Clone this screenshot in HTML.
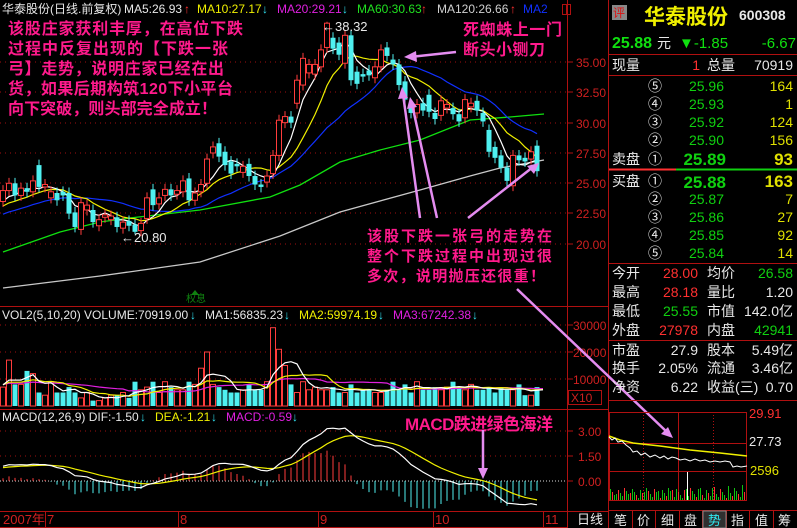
<!DOCTYPE html>
<html><head><meta charset="utf-8">
<style>
html,body{margin:0;padding:0;background:#000;width:797px;height:528px;overflow:hidden}
svg{display:block}
text{font-family:"Liberation Sans","Noto Sans CJK SC",sans-serif}
.cj{font-family:"Liberation Sans","Noto Sans CJK SC",sans-serif;font-weight:bold}
.ax{fill:#d02020;font-size:12px}
.w{fill:#e8e8e8}
</style></head><body>
<svg id="s" width="797" height="528" viewBox="0 0 797 528" xmlns="http://www.w3.org/2000/svg">
<rect width="797" height="528" fill="#000"/>
<defs><clipPath id="mc"><rect x="0" y="18" width="566" height="287"/></clipPath>
<clipPath id="vc"><rect x="0" y="322" width="566" height="86"/></clipPath></defs>
<g id="grid" stroke="#a01010" stroke-dasharray="1,4" stroke-width="1">
<line x1="0" y1="62" x2="566" y2="62"/><line x1="0" y1="92" x2="566" y2="92"/><line x1="0" y1="123" x2="566" y2="123"/><line x1="0" y1="153" x2="566" y2="153"/><line x1="0" y1="183" x2="566" y2="183"/><line x1="0" y1="213" x2="566" y2="213"/><line x1="0" y1="244" x2="566" y2="244"/>
<line x1="0" y1="325" x2="566" y2="325"/><line x1="0" y1="352" x2="566" y2="352"/><line x1="0" y1="379" x2="566" y2="379"/>
<line x1="0" y1="431" x2="566" y2="431"/><line x1="0" y1="456" x2="566" y2="456"/>
</g>
<line x1="0" y1="481" x2="566" y2="481" stroke="#ddd" stroke-dasharray="1,2"/>
<g id="draw"></g>
<!-- frame lines -->
<g stroke="#b01010" stroke-width="1" fill="none">
<line x1="0" y1="306.5" x2="608" y2="306.5"/><line x1="0" y1="409.5" x2="608" y2="409.5"/><line x1="0" y1="511.5" x2="608" y2="511.5"/>
<line x1="567.5" y1="0" x2="567.5" y2="528"/><line x1="608.5" y1="0" x2="608.5" y2="528"/>
<line x1="45.5" y1="511" x2="45.5" y2="528"/><line x1="178.5" y1="511" x2="178.5" y2="528"/><line x1="318.5" y1="511" x2="318.5" y2="528"/><line x1="433.5" y1="511" x2="433.5" y2="528"/><line x1="543.5" y1="511" x2="543.5" y2="528"/>
<line x1="0" y1="527.5" x2="567" y2="527.5"/>
<rect x="562.5" y="4.5" width="8" height="10"/><line x1="566.5" y1="5" x2="566.5" y2="14"/>
<line x1="568" y1="62" x2="573" y2="62"/><line x1="568" y1="92" x2="573" y2="92"/><line x1="568" y1="123" x2="573" y2="123"/><line x1="568" y1="153" x2="573" y2="153"/><line x1="568" y1="183" x2="573" y2="183"/><line x1="568" y1="213" x2="573" y2="213"/><line x1="568" y1="244" x2="573" y2="244"/>
<line x1="568" y1="325" x2="573" y2="325"/><line x1="568" y1="352" x2="573" y2="352"/><line x1="568" y1="379" x2="573" y2="379"/>
<line x1="568" y1="431" x2="573" y2="431"/><line x1="568" y1="456" x2="573" y2="456"/><line x1="568" y1="481" x2="573" y2="481"/>
<rect x="568.5" y="390.5" width="33" height="14"/>
</g>
<!-- axis labels -->
<g class="ax">
<text x="576" y="67">35.00</text><text x="576" y="97">32.50</text><text x="576" y="128">30.00</text><text x="576" y="158">27.50</text><text x="576" y="188">25.00</text><text x="576" y="218">22.50</text><text x="576" y="249">20.00</text>
<text x="573" y="330">30000</text><text x="573" y="357">20000</text><text x="573" y="384">10000</text><text x="571" y="402">X10</text>
<text x="578" y="436">3.00</text><text x="578" y="461">1.50</text><text x="578" y="486">0.00</text>
<text x="3" y="524" font-size="13">2007年</text><text x="47" y="524" font-size="13">7</text><text x="180" y="524" font-size="13">8</text><text x="320" y="524" font-size="13">9</text><text x="435" y="524" font-size="13">10</text><text x="545" y="524" font-size="13">11</text>
</g>
<text x="577" y="524" font-size="13" class="w">日线</text>
<!-- header -->
<g font-size="12">
<text x="2" y="13" class="w">华泰股份(日线.前复权)</text>
<text x="124" y="13" class="w">MA5:26.93</text><text x="184" y="13" fill="#ff3030">↑</text>
<text x="197" y="13" fill="#f0f000">MA10:27.17</text><text x="262" y="13" fill="#30e0f0">↓</text>
<text x="277" y="13" fill="#e020e0">MA20:29.21</text><text x="342" y="13" fill="#30e0f0">↓</text>
<text x="357" y="13" fill="#20e020">MA60:30.63</text><text x="421" y="13" fill="#ff3030">↑</text>
<text x="437" y="13" fill="#d0d0d0">MA120:26.66</text><text x="510" y="13" fill="#ff3030">↑</text>
<text x="523" y="13" fill="#1030ff">MA2</text>
<text x="2" y="319" class="w">VOL2(5,10,20) VOLUME:70919.00</text><text x="190" y="319" fill="#30e0f0">↓</text>
<text x="205" y="319" class="w">MA1:56835.23</text><text x="284" y="319" fill="#30e0f0">↓</text>
<text x="299" y="319" fill="#f0f000">MA2:59974.19</text><text x="378" y="319" fill="#30e0f0">↓</text>
<text x="393" y="319" fill="#e020e0">MA3:67242.38</text><text x="472" y="319" fill="#30e0f0">↓</text>
<text x="2" y="421" class="w">MACD(12,26,9) DIF:-1.50</text><text x="140" y="421" fill="#30e0f0">↓</text>
<text x="155" y="421" fill="#f0f000">DEA:-1.21</text><text x="211" y="421" fill="#30e0f0">↓</text>
<text x="226" y="421" fill="#e020e0">MACD:-0.59</text><text x="292" y="421" fill="#30e0f0">↓</text>
<text x="322" y="31" class="w" font-size="13">←38.32</text>
<text x="121" y="242" class="w" font-size="13">←20.80</text>
<text x="186" y="302" fill="#108010" font-size="10">权息</text>
</g>
<polygon points="195,290 191,295 199,295" fill="#108010"/>
<!-- annotations -->
<g class="cj" fill="#ff1a8c" font-size="16">
<text x="8" y="34" textLength="235" lengthAdjust="spacing">该股庄家获利丰厚，在高位下跌</text>
<text x="8" y="54" textLength="220" lengthAdjust="spacing">过程中反复出现的【下跌一张</text>
<text x="8" y="74" textLength="216" lengthAdjust="spacing">弓】走势，说明庄家已经在出</text>
<text x="8" y="94" textLength="225" lengthAdjust="spacing">货，如果后期构筑120下小平台</text>
<text x="8" y="114" textLength="209" lengthAdjust="spacing">向下突破，则头部完全成立！</text>
<text x="463" y="35" textLength="99" lengthAdjust="spacing">死蜘蛛上一门</text>
<text x="463" y="55" textLength="82" lengthAdjust="spacing">断头小铡刀</text>
<text x="367" y="241" font-size="15" textLength="185" lengthAdjust="spacing">该股下跌一张弓的走势在</text>
<text x="367" y="261" font-size="15" textLength="185" lengthAdjust="spacing">整个下跌过程中出现过很</text>
<text x="367" y="281" font-size="15" textLength="178" lengthAdjust="spacing">多次，说明抛压还很重！</text>
<text x="405" y="430" font-size="17" textLength="148" lengthAdjust="spacing">MACD跌进绿色海洋</text>
</g>
<!-- arrows -->
<g stroke="#e48cf0" stroke-width="2.5" fill="#e48cf0">
<line x1="456" y1="52" x2="410" y2="57"/><polygon points="404,57 416,51 417,62" stroke="none"/>
<line x1="420" y1="218" x2="403" y2="94"/><polygon points="402,87 398,99 408,98" stroke="none"/>
<line x1="437" y1="218" x2="412" y2="104"/><polygon points="410,97 407,109 417,107" stroke="none"/>
<line x1="468" y1="218" x2="533" y2="167"/><polygon points="539,163 527,166 534,174" stroke="none"/>
<line x1="517" y1="289" x2="668" y2="433"/><polygon points="673,438 661,434 668,427" stroke="none"/>
<line x1="483" y1="430" x2="483" y2="472"/><polygon points="483,479 478,468 488,468" stroke="none"/>
</g>
<!-- right panel -->
<rect x="612" y="5" width="15" height="15" fill="#888"/>
<text x="613" y="17" fill="#e01010" font-size="12">评</text>
<text x="644" y="24" fill="#f0f000" font-size="21" class="cj">华泰股份</text>
<text x="739" y="20" class="w" font-size="14" font-weight="bold">600308</text>
<text x="612" y="48" fill="#10e010" font-size="16" font-weight="bold">25.88</text>
<text x="657" y="48" class="w" font-size="14">元</text>
<text x="679" y="48" fill="#10e010" font-size="15">▼-1.85</text>
<text x="796" y="48" fill="#10e010" font-size="15" text-anchor="end">-6.67</text>
<g stroke="#b01010"><line x1="609" y1="54.5" x2="797" y2="54.5"/><line x1="609" y1="75.5" x2="797" y2="75.5"/><line x1="609" y1="263.5" x2="797" y2="263.5"/><line x1="609" y1="340.5" x2="797" y2="340.5"/><line x1="609" y1="400.5" x2="797" y2="400.5"/><line x1="609" y1="510.5" x2="797" y2="510.5"/></g>
<line x1="609" y1="169.5" x2="676" y2="169.5" stroke="#ff3030" stroke-width="2"/><line x1="676" y1="169.5" x2="797" y2="169.5" stroke="#10d010" stroke-width="2"/>
<g font-size="14">
<text x="612" y="70" class="w">现量</text><text x="700" y="70" fill="#ff3030" text-anchor="end">1</text><text x="707" y="70" class="w">总量</text><text x="793" y="70" class="w" text-anchor="end">70919</text>
</g>
<g font-size="14" id="ob"></g>
<g font-size="14">
<text x="612" y="278" class="w">今开</text><text x="698" y="278" fill="#ff3030" text-anchor="end">28.00</text><text x="707" y="278" class="w">均价</text><text x="793" y="278" fill="#10d010" text-anchor="end">26.58</text>
<text x="612" y="297" class="w">最高</text><text x="698" y="297" fill="#ff3030" text-anchor="end">28.18</text><text x="707" y="297" class="w">量比</text><text x="793" y="297" class="w" text-anchor="end">1.20</text>
<text x="612" y="316" class="w">最低</text><text x="698" y="316" fill="#10d010" text-anchor="end">25.55</text><text x="707" y="316" class="w">市值</text><text x="793" y="316" class="w" text-anchor="end">142.0亿</text>
<text x="612" y="335" class="w">外盘</text><text x="698" y="335" fill="#ff3030" text-anchor="end">27978</text><text x="707" y="335" class="w">内盘</text><text x="793" y="335" fill="#10d010" text-anchor="end">42941</text>
<text x="612" y="355" class="w">市盈</text><text x="698" y="355" class="w" text-anchor="end">27.9</text><text x="707" y="355" class="w">股本</text><text x="793" y="355" class="w" text-anchor="end">5.49亿</text>
<text x="612" y="373" class="w">换手</text><text x="698" y="373" class="w" text-anchor="end">2.05%</text><text x="707" y="373" class="w">流通</text><text x="793" y="373" class="w" text-anchor="end">3.46亿</text>
<text x="612" y="392" class="w">净资</text><text x="698" y="392" class="w" text-anchor="end">6.22</text><text x="707" y="392" class="w">收益(三)</text><text x="793" y="392" class="w" text-anchor="end">0.70</text>
</g>
<!-- mini chart -->
<g stroke="#b01010" fill="none">
<rect x="609.5" y="412.5" width="137" height="88"/>
<line x1="609" y1="443.5" x2="747" y2="443.5"/><line x1="609" y1="471.5" x2="747" y2="471.5"/>
<line x1="678.5" y1="412" x2="678.5" y2="500"/>
<line x1="643.5" y1="412" x2="643.5" y2="500" stroke-dasharray="1,2"/><line x1="713.5" y1="412" x2="713.5" y2="500" stroke-dasharray="1,2"/>
</g>
<polyline points="609,436 620,440 633,443 660,446 690,450 720,453 747,456" stroke="#f0f000" stroke-width="1.5" fill="none"/>
<polyline points="609,437 612,440 615,438 618,442 622,441 626,445 630,448 633,452 637,451 641,455 645,453 650,457 655,455 660,458 664,456 668,459 672,457 676,458 680,460 685,459 690,461 695,459 700,461 705,460 710,462 715,461 720,462 725,461 730,462 733,467 737,466 741,467 747,466" stroke="#fff" stroke-width="1" fill="none"/>
<g id="mv"></g>
<line x1="687.5" y1="472" x2="687.5" y2="500" stroke="#fff"/>
<text x="749" y="418" fill="#ff3030" font-size="13">29.91</text>
<text x="749" y="446" class="w" font-size="13">27.73</text>
<text x="750" y="475" fill="#e0e000" font-size="13">2596</text>
<!-- tabs -->
<g stroke="#b01010"><line x1="632.5" y1="511" x2="632.5" y2="528"/><line x1="655.5" y1="511" x2="655.5" y2="528"/><line x1="679.5" y1="511" x2="679.5" y2="528"/><line x1="702.5" y1="511" x2="702.5" y2="528"/><line x1="726.5" y1="511" x2="726.5" y2="528"/><line x1="749.5" y1="511" x2="749.5" y2="528"/><line x1="773.5" y1="511" x2="773.5" y2="528"/></g>
<rect x="703" y="511" width="23" height="17" fill="#303030" stroke="#888"/>
<g font-size="13" class="w">
<text x="614" y="525">笔</text><text x="637" y="525">价</text><text x="661" y="525">细</text><text x="684" y="525">盘</text><text x="708" y="525" fill="#30e8f0" style="fill:#30e8f0">势</text><text x="731" y="525">指</text><text x="755" y="525">值</text><text x="778" y="525">筹</text>
</g>
</svg>
<script>
(function(){
var NS="http://www.w3.org/2000/svg";
function el(p,t,a){var e=document.createElementNS(NS,t);for(var k in a)e.setAttribute(k,a[k]);p.appendChild(e);return e;}
var D=[[23.5,24.4],[24.4,25.0],[25.0,24.0],[24.0,24.6],[24.6,24.3],[24.3,25.2],[26.5,24.7],[24.7,24.9],[23.8,24.3],[24.2,23.6],[24.3,24.0],[24.2,22.5],[22.6,21.4],[21.2,23.4],[22.8,23.2],[22.8,21.8],[21.5,22.0],[22.2,22.4],[22.0,22.3],[22.2,21.4],[21.3,21.8],[21.9,21.5],[21.6,21.0],[21.1,21.7],[22.1,23.8],[24.5,23.2],[23.3,23.8],[24.0,24.5],[24.5,24.0],[24.1,24.4],[24.3,25.2],[25.4,23.6],[23.6,24.2],[24.3,24.9],[25.0,27.0],[27.5,28.0],[28.3,27.2],[27.6,26.5],[26.8,25.8],[26.6,26.4],[25.9,26.4],[26.6,25.6],[25.6,24.9],[24.9,24.7],[25.1,25.6],[25.8,27.3],[27.3,30.2],[30.0,30.5],[30.5,30.0],[31.6,33.5],[33.1,35.3],[34.1,34.8],[34.0,34.8],[34.6,36.0],[36.2,38.2],[37.0,36.1],[36.6,35.6],[34.9,37.2],[37.2,33.5],[34.2,33.2],[34.0,33.8],[34.3,33.9],[33.7,34.6],[34.6,36.0],[36.2,35.5],[35.2,34.8],[34.8,33.1],[33.4,31.9],[31.5,30.8],[30.8,31.5],[31.6,31.0],[32.3,30.9],[30.8,30.3],[30.6,31.8],[31.2,31.5],[31.2,30.7],[30.7,30.1],[30.4,31.9],[31.3,31.6],[31.8,31.0],[30.8,30.1],[29.4,27.6],[28.0,27.1],[27.3,26.3],[26.3,25.2],[24.8,27.3],[27.3,26.9],[27.1,26.8],[27.0,27.6],[28.1,26.0]];
var V=[7,17,8,8,13,12,5,4,9,5,5,7,5,3,5,2,2,3,4,4,5,3,9,6,7,9,5,9,7,6,6,9,8,14,20,8,7,6,5,5,6,8,6,6,9,29,21,15,8,5,9,6,7,6,6,7,5,5,8,5,6,6,5,5,6,9,6,8,5,9,6,6,7,6,7,9,7,6,8,6,6,7,5,7,6,6,8,4,4,7,7];
var NP=40,pad=[];for(var i=0;i<NP;i++)pad.push(18.5+5*i/(NP-1));
var cl=pad.concat(D.map(function(d){return d[1];}));
function Y(p){return 62+(35-p)*12.13;}
function X(i){return 3+6*i;}
var g=document.getElementById('draw');
var gm=el(g,'g',{'clip-path':'url(#mc)'});
el(gm,'polyline',{points:"3,252 60,232 100,222 130,218 200,210 270,197 300,185 340,162 380,150 420,140 470,120 510,117 544,114",stroke:"#10e010",fill:"none","stroke-width":"1.3"});
el(gm,'polyline',{points:"3,288 100,276 200,262 280,236 340,212 420,190 470,176 500,168 544,160",stroke:"#c8c8c8",fill:"none","stroke-width":"1.3"});
function ma(arr,n){var r=[];for(var i=0;i<arr.length;i++){if(i<n-1){r.push(null);continue;}var s=0;for(var j=i-n+1;j<=i;j++)s+=arr[j];r.push(s/n);}return r;}
[[20,"#1030ff"],[10,"#f0f000"],[5,"#ffffff"]].forEach(function(m){var a=ma(cl,m[0]),pts=[];for(var i=0;i<D.length;i++)pts.push(X(i)+","+Y(a[i+NP]).toFixed(1));el(gm,'polyline',{points:pts.join(" "),stroke:m[1],fill:"none","stroke-width":"1.2"});});
var RED="#ff3c3c",CY="#4ff0f0";
for(var i=0;i<D.length;i++){var o=D[i][0],c=D[i][1],hi=Math.max(o,c)+0.45,lo=Math.min(o,c)-0.45;if(i==22)lo=20.8;if(i==54)hi=38.32;var x=X(i),up=c>=o;var col=up?RED:CY;
el(gm,'line',{x1:x,y1:Y(hi),x2:x,y2:Y(lo),stroke:col});
var t=Y(Math.max(o,c)),b=Y(Math.min(o,c));if(b-t<1)b=t+1;
if(up)el(gm,'rect',{x:x-2.5,y:t,width:5,height:b-t,fill:"#000",stroke:col});else el(gm,'rect',{x:x-2.5,y:t,width:5,height:b-t,fill:col});}
// volume
var gv=el(g,'g',{'clip-path':'url(#vc)'});
for(var i=0;i<D.length;i++){var up=D[i][1]>=D[i][0],h=V[i]*2.7,x=X(i);if(up)el(gv,'rect',{x:x-2.5,y:406-h,width:5,height:h,fill:"none",stroke:RED});else el(gv,'rect',{x:x-2.5,y:406-h,width:5,height:h,fill:CY});}
var vp=[];for(var i=0;i<25;i++)vp.push(8);var vv=vp.concat(V);
[[20,"#e020e0"],[10,"#f0f000"],[5,"#ffffff"]].forEach(function(m){var a=ma(vv,m[0]),pts=[];for(var i=0;i<V.length;i++)pts.push(X(i)+","+(406-a[i+25]*2.7).toFixed(1));el(gv,'polyline',{points:pts.join(" "),stroke:m[1],fill:"none","stroke-width":"1.2"});});
// macd
function ema(a,n){var r=[a[0]],k=2/(n+1);for(var i=1;i<a.length;i++)r.push(r[i-1]+k*(a[i]-r[i-1]));return r;}
var e12=ema(cl,12),e26=ema(cl,26),dif=e12.map(function(v,i){return v-e26[i];}),dea=ema(dif,9);
function MY(v){return 481-v*16.7;}
var gd=el(g,'g',{});
for(var i=0;i<D.length;i++){var j=i+NP,m=2*(dif[j]-dea[j]),x=X(i);el(gd,'line',{x1:x,y1:481,x2:x,y2:MY(m),stroke:m>=0?RED:CY});}
var p1=[],p2=[];for(var i=0;i<D.length;i++){p1.push(X(i)+","+MY(dif[i+NP]).toFixed(1));p2.push(X(i)+","+MY(dea[i+NP]).toFixed(1));}
el(gd,'polyline',{points:p2.join(" "),stroke:"#f0f000",fill:"none","stroke-width":"1.2"});
el(gd,'polyline',{points:p1.join(" "),stroke:"#fff",fill:"none","stroke-width":"1.2"});
// mini vol
var mv=document.getElementById('mv');
for(var x=610;x<746;x+=2){var h=2+((x*37)%11);if(x%7==0)h+=4;el(mv,'line',{x1:x+.5,y1:500-h,x2:x+.5,y2:500,stroke:(x%3==0)?"#ff3030":"#10c010"});}
})();
</script>
<div style="position:absolute;left:0;top:0;width:797px;height:528px;pointer-events:none">
<svg width="797" height="528" style="position:absolute;left:0;top:0" xmlns="http://www.w3.org/2000/svg">
<g font-family="Liberation Sans,Noto Sans CJK SC,sans-serif" font-size="14">
<text x="655" y="91" fill="#eee" text-anchor="middle">⑤</text><text x="724" y="91" fill="#10d010" text-anchor="end">25.96</text><text x="793" y="91" fill="#e0e000" text-anchor="end">164</text>
<text x="655" y="109" fill="#eee" text-anchor="middle">④</text><text x="724" y="109" fill="#10d010" text-anchor="end">25.93</text><text x="793" y="109" fill="#e0e000" text-anchor="end">1</text>
<text x="655" y="127" fill="#eee" text-anchor="middle">③</text><text x="724" y="127" fill="#10d010" text-anchor="end">25.92</text><text x="793" y="127" fill="#e0e000" text-anchor="end">124</text>
<text x="655" y="145" fill="#eee" text-anchor="middle">②</text><text x="724" y="145" fill="#10d010" text-anchor="end">25.90</text><text x="793" y="145" fill="#e0e000" text-anchor="end">156</text>
<text x="612" y="164" fill="#eee">卖盘</text><text x="655" y="164" fill="#eee" text-anchor="middle">①</text><text x="726" y="165" fill="#10d010" text-anchor="end" font-size="17" font-weight="bold">25.89</text><text x="793" y="165" fill="#e0e000" text-anchor="end" font-size="17" font-weight="bold">93</text>
<text x="612" y="186" fill="#eee">买盘</text><text x="655" y="186" fill="#eee" text-anchor="middle">①</text><text x="726" y="188" fill="#10d010" text-anchor="end" font-size="17" font-weight="bold">25.88</text><text x="793" y="187" fill="#e0e000" text-anchor="end" font-size="17" font-weight="bold">163</text>
<text x="655" y="204" fill="#eee" text-anchor="middle">②</text><text x="724" y="204" fill="#10d010" text-anchor="end">25.87</text><text x="793" y="204" fill="#e0e000" text-anchor="end">7</text>
<text x="655" y="222" fill="#eee" text-anchor="middle">③</text><text x="724" y="222" fill="#10d010" text-anchor="end">25.86</text><text x="793" y="222" fill="#e0e000" text-anchor="end">27</text>
<text x="655" y="240" fill="#eee" text-anchor="middle">④</text><text x="724" y="240" fill="#10d010" text-anchor="end">25.85</text><text x="793" y="240" fill="#e0e000" text-anchor="end">92</text>
<text x="655" y="258" fill="#eee" text-anchor="middle">⑤</text><text x="724" y="258" fill="#10d010" text-anchor="end">25.84</text><text x="793" y="258" fill="#e0e000" text-anchor="end">14</text>
</g></svg></div>
</body></html>
